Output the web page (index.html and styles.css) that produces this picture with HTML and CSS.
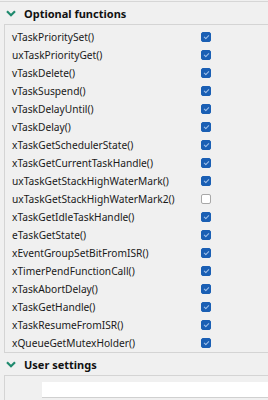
FILE: index.html
```html
<!DOCTYPE html>
<html lang="en">
<head>
  <meta charset="UTF-8">
  <title>Optional functions</title>
  <link rel="stylesheet" href="styles.css">
</head>
<body>
<div class="page">
  <div class="section-head">
    <svg class="chevron" width="10" height="7" viewBox="0 0 10 7"><path d="M1 1.2 L5 5.2 L9 1.2" fill="none" stroke="#1f8a6e" stroke-width="2.2"/></svg>
    <span>Optional functions</span>
  </div>
  <div class="panel">
    <div class="row"><span class="name">vTaskPrioritySet()</span><span class="check on"></span></div>
    <div class="row"><span class="name">uxTaskPriorityGet()</span><span class="check on"></span></div>
    <div class="row"><span class="name">vTaskDelete()</span><span class="check on"></span></div>
    <div class="row"><span class="name">vTaskSuspend()</span><span class="check on"></span></div>
    <div class="row"><span class="name">vTaskDelayUntil()</span><span class="check on"></span></div>
    <div class="row"><span class="name">vTaskDelay()</span><span class="check on"></span></div>
    <div class="row"><span class="name">xTaskGetSchedulerState()</span><span class="check on"></span></div>
    <div class="row"><span class="name">xTaskGetCurrentTaskHandle()</span><span class="check on"></span></div>
    <div class="row"><span class="name">uxTaskGetStackHighWaterMark()</span><span class="check on"></span></div>
    <div class="row"><span class="name">uxTaskGetStackHighWaterMark2()</span><span class="check"></span></div>
    <div class="row"><span class="name">xTaskGetIdleTaskHandle()</span><span class="check on"></span></div>
    <div class="row"><span class="name">eTaskGetState()</span><span class="check on"></span></div>
    <div class="row"><span class="name">xEventGroupSetBitFromISR()</span><span class="check on"></span></div>
    <div class="row"><span class="name">xTimerPendFunctionCall()</span><span class="check on"></span></div>
    <div class="row"><span class="name">xTaskAbortDelay()</span><span class="check on"></span></div>
    <div class="row"><span class="name">xTaskGetHandle()</span><span class="check on"></span></div>
    <div class="row"><span class="name">xTaskResumeFromISR()</span><span class="check on"></span></div>
    <div class="row"><span class="name">xQueueGetMutexHolder()</span><span class="check on"></span></div>
  </div>
  <div class="section-head">
    <svg class="chevron" width="10" height="7" viewBox="0 0 10 7"><path d="M1 1.2 L5 5.2 L9 1.2" fill="none" stroke="#1f8a6e" stroke-width="2.2"/></svg>
    <span>User settings</span>
  </div>
  <div class="panel panel-user">
    <div class="field"></div>
  </div>
</div>
</body>
</html>
```

FILE: styles.css
```css
* {
  margin: 0;
  padding: 0;
  box-sizing: border-box;
}

body {
  font-family: 'Noto Sans', 'Open Sans', sans-serif;
  background: #f0f0f0;
  color: #1a1a1a;
  overflow: hidden;
}

.page {
  border-top: 1px solid #d6d6d6;
  margin-top: 1px;
}

.section-head {
  display: flex;
  align-items: center;
  height: 22px;
  padding-left: 6px;
  font-size: 11px;
  font-weight: 700;
  color: #111;
}

.chevron {
  margin-right: 8px;
}

.panel {
  margin-left: 4px;
  border: 1px solid #d4d4d4;
  border-right: none;
  padding: 3px 0 0 7px;
}

.row {
  display: flex;
  align-items: center;
  height: 18px;
  font-size: 10.2px;
}

.name {
  width: 189px;
}

.check {
  width: 10px;
  height: 10px;
  border: 1px solid #a8a8a8;
  border-radius: 2px;
  background: #fff;
  position: relative;
}

.check.on {
  background: #1a5fb4;
  border-color: #1a5fb4;
}

.check.on:after {
  content: "";
  position: absolute;
  left: 3px;
  top: 1px;
  width: 2px;
  height: 4px;
  border: solid #9fc0ea;
  border-width: 0 1px 1px 0;
  transform: rotate(45deg);
}

.panel-user {
  height: 40px;
  padding: 6px 0 0 37px;
}

.field {
  height: 16px;
  background: #fff;
  border-bottom: 1px solid #d0d0d0;
}
```
